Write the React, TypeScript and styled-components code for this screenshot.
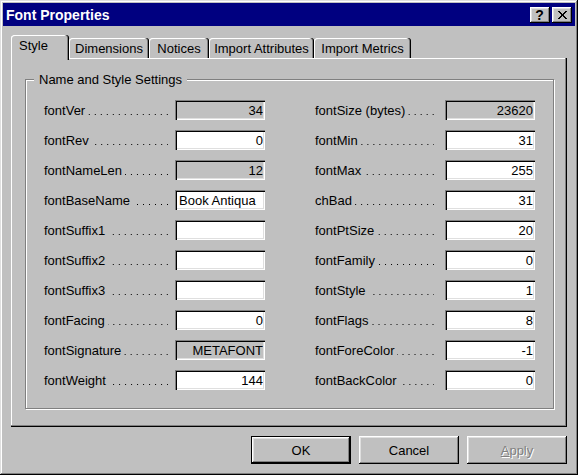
import React, { FC } from "react";
import styled, { createGlobalStyle } from "styled-components";

const FACE = "#c0c0c0";
const LIGHT = "#dfdfdf";
const SHADOW = "#808080";

const GlobalStyle = createGlobalStyle`
  html, body {
    margin: 0;
    background: ${FACE};
  }
  body {
    font-family: "Liberation Sans", Arial, sans-serif;
    font-size: 13px;
    color: #000;
  }
`;

interface IField {
  name: string;
  value: string;
  disabled?: boolean;
  align?: "left" | "right";
}

const leftFields: IField[] = [
  { name: "fontVer", value: "34", disabled: true },
  { name: "fontRev", value: "0" },
  { name: "fontNameLen", value: "12", disabled: true },
  { name: "fontBaseName", value: "Book Antiqua", align: "left" },
  { name: "fontSuffix1", value: "" },
  { name: "fontSuffix2", value: "" },
  { name: "fontSuffix3", value: "" },
  { name: "fontFacing", value: "0" },
  { name: "fontSignature", value: "METAFONT", disabled: true },
  { name: "fontWeight", value: "144" },
];

const rightFields: IField[] = [
  { name: "fontSize (bytes)", value: "23620", disabled: true },
  { name: "fontMin", value: "31" },
  { name: "fontMax", value: "255" },
  { name: "chBad", value: "31" },
  { name: "fontPtSize", value: "20" },
  { name: "fontFamily", value: "0" },
  { name: "fontStyle", value: "1" },
  { name: "fontFlags", value: "8" },
  { name: "fontForeColor", value: "-1" },
  { name: "fontBackColor", value: "0" },
];

const tabs = [
  { label: "Style", width: 58 },
  { label: "Dimensions", width: 80 },
  { label: "Notices", width: 60 },
  { label: "Import Attributes", width: 105 },
  { label: "Import Metrics", width: 97 },
];

const CloseGlyph: FC = () => (
  <svg width="9" height="8" viewBox="0 0 9 8" shapeRendering="crispEdges">
    <path
      fill="#000"
      d="M0 0h2v1H0zM7 0h2v1H7zM1 1h2v1H1zM6 1h2v1H6zM2 2h2v1H2zM5 2h2v1H5zM3 3h3v2H3zM2 5h2v1H2zM5 5h2v1H5zM1 6h2v1H1zM6 6h2v1H6zM0 7h2v1H0zM7 7h2v1H7z"
    />
  </svg>
);

const FieldRow: FC<{ field: IField; labelWidth: number; leaderGap: number }> = ({
  field,
  labelWidth,
  leaderGap,
}) => (
  <Field>
    <Label $width={labelWidth} $gap={leaderGap}>
      <span>{field.name}</span>
      <Leader />
    </Label>
    <Value
      readOnly
      value={field.value}
      $disabled={field.disabled}
      $align={field.align || "right"}
    />
  </Field>
);

const App: FC = () => {
  return (
    <>
      <GlobalStyle />
      <Window>
        <TitleBar>
          <Title>Font Properties</Title>
          <CaptionButton>
            <HelpMark>?</HelpMark>
          </CaptionButton>
          <CaptionButton>
            <CloseGlyph />
          </CaptionButton>
        </TitleBar>

        <Body>
          <TabStrip>
            {tabs.map((t, i) => (
              <Tab key={t.label} $width={t.width} $active={i === 0}>
                {t.label}
              </Tab>
            ))}
          </TabStrip>

          <Panel>
            <GroupBox>
              <Legend>Name and Style Settings</Legend>
              <Columns>
                <Column>
                  {leftFields.map((f) => (
                    <FieldRow key={f.name} field={f} labelWidth={131} leaderGap={7} />
                  ))}
                </Column>
                <Column>
                  {rightFields.map((f) => (
                    <FieldRow key={f.name} field={f} labelWidth={130} leaderGap={11} />
                  ))}
                </Column>
              </Columns>
            </GroupBox>
          </Panel>

          <ButtonRow>
            <PushButton $default>OK</PushButton>
            <PushButton>Cancel</PushButton>
            <PushButton disabled>
              <u>A</u>pply
            </PushButton>
          </ButtonRow>
        </Body>
      </Window>
    </>
  );
};

export default App;

const Window = styled.div`
  box-sizing: border-box;
  width: 578px;
  height: 475px;
  padding: 3px;
  background: ${FACE};
  display: flex;
  flex-direction: column;
  box-shadow: inset -1px -1px #000, inset 1px 1px ${LIGHT},
    inset -2px -2px ${SHADOW}, inset 2px 2px #fff;
`;

const TitleBar = styled.div`
  display: flex;
  align-items: center;
  gap: 2px;
  height: 23px;
  padding: 0 3px;
  background: #000080;
`;

const Title = styled.div`
  flex: 1;
  color: #fff;
  font-weight: bold;
  font-size: 14px;
`;

const CaptionButton = styled.div`
  box-sizing: border-box;
  width: 20px;
  height: 16px;
  display: flex;
  align-items: center;
  justify-content: center;
  background: ${FACE};
  box-shadow: inset -1px -1px #000, inset 1px 1px #fff,
    inset -2px -2px ${SHADOW}, inset 2px 2px ${LIGHT};
`;

const HelpMark = styled.span`
  font-weight: bold;
  font-size: 14px;
  line-height: 14px;
  margin-left: -1px;
`;

const Body = styled.div`
  padding: 9px 8px 0;
`;

const TabStrip = styled.div`
  display: flex;
  align-items: flex-end;
  height: 23px;
`;

const Tab = styled.div<{ $width: number; $active?: boolean }>`
  box-sizing: border-box;
  width: ${({ $width }) => $width}px;
  height: ${({ $active }) => ($active ? 25 : 20)}px;
  margin-bottom: ${({ $active }) => ($active ? -2 : 0)}px;
  position: ${({ $active }) => ($active ? "relative" : "static")};
  z-index: ${({ $active }) => ($active ? 1 : "auto")};
  padding-left: ${({ $active }) => ($active ? 8 : 0)}px;
  text-align: ${({ $active }) => ($active ? "left" : "center")};
  line-height: 21px;
  white-space: nowrap;
  background: ${FACE};
  border-radius: 3px 3px 0 0;
  box-shadow: inset -1px 0 #000, inset -2px 0 ${SHADOW}, inset 1px 1px #fff;
`;

const Panel = styled.div`
  box-sizing: border-box;
  height: 369px;
  padding: 14px 13px 0 14px;
  box-shadow: inset -1px -1px #000, inset -2px -2px ${SHADOW},
    inset 1px 1px #fff;
`;

const GroupBox = styled.fieldset`
  margin: 0;
  min-width: 0;
  padding: 13px 0 18px 8px;
  border: 1px solid ${SHADOW};
  box-shadow: 1px 1px 0 #fff, inset 1px 1px 0 #fff;
`;

const Legend = styled.legend`
  padding: 0 5px;
  line-height: 15px;
  background: ${FACE};
`;

const Columns = styled.div`
  display: grid;
  grid-template-columns: 221px 220px;
  column-gap: 50px;
  margin-left: 10px;
`;

const Column = styled.div`
  display: flex;
  flex-direction: column;
  gap: 10px;
`;

const Field = styled.div`
  display: flex;
  align-items: center;
  height: 20px;
`;

const Label = styled.div<{ $width: number; $gap: number }>`
  box-sizing: border-box;
  display: flex;
  width: ${({ $width }) => $width}px;
  height: 15px;
  line-height: 15px;
  padding-right: ${({ $gap }) => $gap}px;
  white-space: nowrap;
`;

/* dotted leader between a field name and its box */
const Leader = styled.span`
  flex: 1;
  align-self: flex-end;
  height: 1px;
  margin: 0 0 3px 3px;
  background-image: linear-gradient(to left, #000 1px, transparent 1px);
  background-size: 6px 1px;
  background-position: right top;
  background-repeat: repeat-x;
`;

const Value = styled.input<{ $disabled?: boolean; $align: "left" | "right" }>`
  box-sizing: border-box;
  width: 90px;
  height: 20px;
  margin: 0;
  padding: 0 2px 0 4px;
  border: none;
  outline: none;
  font: 13px "Liberation Sans", Arial, sans-serif;
  color: #000;
  text-align: ${({ $align }) => $align};
  background: ${({ $disabled }) => ($disabled ? FACE : "#fff")};
  box-shadow: inset 1px 1px ${SHADOW}, inset 2px 2px #000, inset -1px -1px #fff,
    inset -2px -2px ${LIGHT};
`;

const ButtonRow = styled.div`
  display: flex;
  justify-content: flex-end;
  gap: 8px;
  margin-top: 9px;
`;

const PushButton = styled.button<{ $default?: boolean }>`
  box-sizing: border-box;
  width: 100px;
  height: 28px;
  margin: 0;
  padding: 0;
  font: 13px "Liberation Sans", Arial, sans-serif;
  color: #000;
  background: ${FACE};
  border: ${({ $default }) => ($default ? "1px solid #000" : "none")};
  box-shadow: inset -1px -1px #000, inset 1px 1px #fff,
    inset -2px -2px ${SHADOW}, inset 2px 2px ${LIGHT};

  &:disabled {
    color: ${SHADOW};
    text-shadow: 1px 1px 0 #fff;
  }
`;
